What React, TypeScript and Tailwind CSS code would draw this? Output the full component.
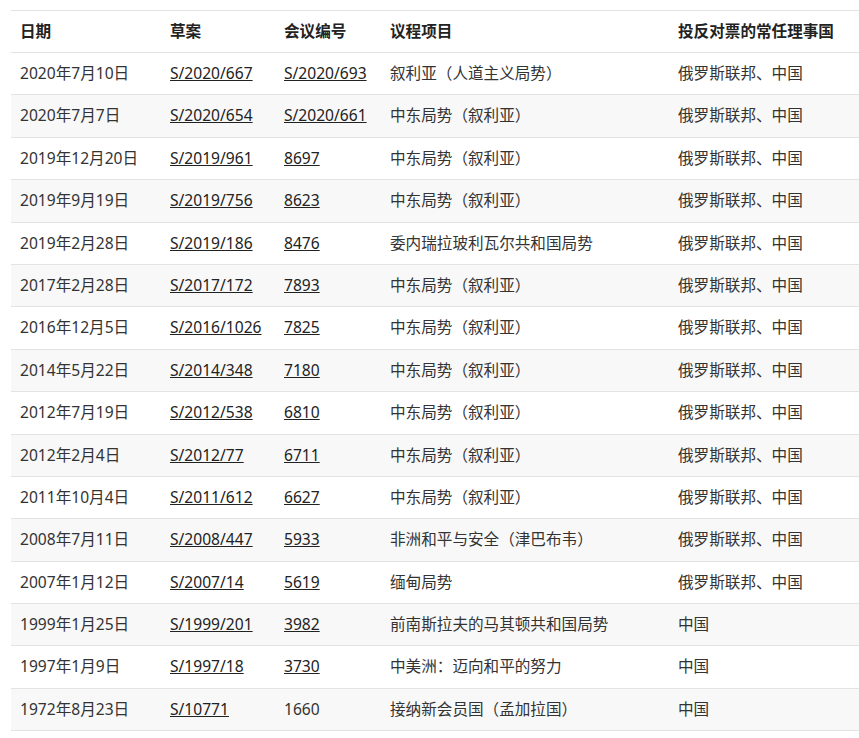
const rows: [string, string, string, boolean, string, string][] = [
  ["2020年7月10日", "S/2020/667", "S/2020/693", true, "叙利亚（人道主义局势）", "俄罗斯联邦、中国"],
  ["2020年7月7日", "S/2020/654", "S/2020/661", true, "中东局势（叙利亚）", "俄罗斯联邦、中国"],
  ["2019年12月20日", "S/2019/961", "8697", true, "中东局势（叙利亚）", "俄罗斯联邦、中国"],
  ["2019年9月19日", "S/2019/756", "8623", true, "中东局势（叙利亚）", "俄罗斯联邦、中国"],
  ["2019年2月28日", "S/2019/186", "8476", true, "委内瑞拉玻利瓦尔共和国局势", "俄罗斯联邦、中国"],
  ["2017年2月28日", "S/2017/172", "7893", true, "中东局势（叙利亚）", "俄罗斯联邦、中国"],
  ["2016年12月5日", "S/2016/1026", "7825", true, "中东局势（叙利亚）", "俄罗斯联邦、中国"],
  ["2014年5月22日", "S/2014/348", "7180", true, "中东局势（叙利亚）", "俄罗斯联邦、中国"],
  ["2012年7月19日", "S/2012/538", "6810", true, "中东局势（叙利亚）", "俄罗斯联邦、中国"],
  ["2012年2月4日", "S/2012/77", "6711", true, "中东局势（叙利亚）", "俄罗斯联邦、中国"],
  ["2011年10月4日", "S/2011/612", "6627", true, "中东局势（叙利亚）", "俄罗斯联邦、中国"],
  ["2008年7月11日", "S/2008/447", "5933", true, "非洲和平与安全（津巴布韦）", "俄罗斯联邦、中国"],
  ["2007年1月12日", "S/2007/14", "5619", true, "缅甸局势", "俄罗斯联邦、中国"],
  ["1999年1月25日", "S/1999/201", "3982", true, "前南斯拉夫的马其顿共和国局势", "中国"],
  ["1997年1月9日", "S/1997/18", "3730", true, "中美洲：迈向和平的努力", "中国"],
  ["1972年8月23日", "S/10771", "1660", false, "接纳新会员国（孟加拉国）", "中国"],
];

export default function App() {
  return (
    <div className="bg-white min-h-screen pt-[10px] pl-[11px] font-['Noto_Sans','Noto_Sans_CJK_SC',sans-serif] text-[15.6px] text-[#333]">
      <table className="table-fixed border-collapse w-[848px]">
        <colgroup>
          <col className="w-[150px]" />
          <col className="w-[114px]" />
          <col className="w-[106px]" />
          <col className="w-[288px]" />
          <col className="w-[190px]" />
        </colgroup>
        <thead>
          <tr className="h-[42px] border-t border-b border-[#e3e3e3] text-left">
            <th className="pl-[9px] font-bold text-[#222]">日期</th>
            <th className="pl-[9px] font-bold text-[#222]">草案</th>
            <th className="pl-[9px] font-bold text-[#222]">会议编号</th>
            <th className="pl-[9px] font-bold text-[#222]">议程项目</th>
            <th className="pl-[9px] font-bold text-[#222]">投反对票的常任理事国</th>
          </tr>
        </thead>
        <tbody>
          {rows.map((r, i) => (
            <tr key={i} className={"h-[42.4px] border-b border-[#e3e3e3] " + (i % 2 === 1 ? "bg-[#f8f8f8]" : "bg-white")}>
              <td className="pl-[9px] whitespace-nowrap">{r[0]}</td>
              <td className="pl-[9px] whitespace-nowrap">
                <a className="underline text-[#222]">{r[1]}</a>
              </td>
              <td className="pl-[9px] whitespace-nowrap">
                {r[3] ? <a className="underline text-[#222]">{r[2]}</a> : r[2]}
              </td>
              <td className="pl-[9px] whitespace-nowrap">{r[4]}</td>
              <td className="pl-[9px] whitespace-nowrap">{r[5]}</td>
            </tr>
          ))}
        </tbody>
      </table>
    </div>
  );
}
